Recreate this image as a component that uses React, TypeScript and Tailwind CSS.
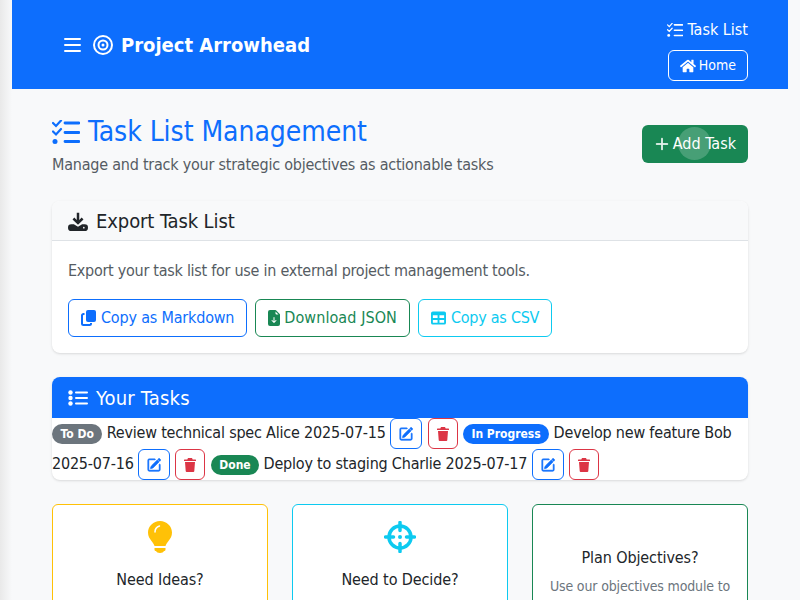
import { BsFileEarmarkArrowDownFill, BsPencilSquare, BsPlusLg } from "react-icons/bs";
import { FaHome } from "react-icons/fa";

const font = "font-['DejaVu_Sans_Condensed','DejaVu_Sans',sans-serif]";

function MenuIcon() {
  return (
    <svg viewBox="0 0 17 16" className="h-[16px] w-[17px]" fill="none" stroke="currentColor" strokeWidth="2" strokeLinecap="round">
      <path d="M1 2h15M1 8h15M1 14h15" />
    </svg>
  );
}

function BullseyeIcon() {
  return (
    <svg viewBox="0 0 20 20" className="ml-[12px] h-[20px] w-[20px]" fill="none" stroke="currentColor" strokeWidth="2">
      <circle cx="10" cy="10" r="9" />
      <circle cx="10" cy="10" r="4.500" />
      <circle cx="10" cy="10" r="1.500" fill="currentColor" stroke="none" />
    </svg>
  );
}

function ListCheckIcon({ className }: { className: string }) {
  return (
    <svg viewBox="0 0 28 24" className={className} fill="none" stroke="currentColor" strokeLinecap="round">
      <path d="M13 3h14M13 12.500h14M13 21.500h14" strokeWidth="2.800" />
      <path d="M1 3l3 3 5-5.500M1 11.500l3 3 5-5.500" strokeWidth="2.200" />
      <circle cx="3" cy="21.500" r="2.500" fill="currentColor" stroke="none" />
    </svg>
  );
}

function TasksIcon() {
  return (
    <svg viewBox="0 0 20 16" className="h-[16px] w-[20px]" fill="currentColor" stroke="currentColor" strokeLinecap="round">
      <circle cx="2.500" cy="2.500" r="2.200" stroke="none" />
      <circle cx="2.500" cy="8" r="2.200" stroke="none" />
      <circle cx="2.500" cy="13.500" r="2.200" stroke="none" />
      <path d="M8 2.500h11M8 8h11M8 13.500h11" strokeWidth="2" />
    </svg>
  );
}

function ExportIcon() {
  return (
    <svg viewBox="0 0 24 24" className="h-[20px] w-[20px]" fill="currentColor">
      <path d="M12 2v12M6.500 9l5.500 5.500L17.500 9" fill="none" stroke="currentColor" strokeWidth="3" />
      <path d="M4 16h3l5 3 5-3h3a4 4 0 0 1 0 8H4a4 4 0 0 1 0-8z" />
      <circle cx="19" cy="20" r="1" fill="#f8f9fa" />
    </svg>
  );
}

function CopyIcon() {
  return (
    <svg viewBox="0 0 16 16" className="h-[16px] w-[16px]" fill="currentColor">
      <rect x="5" y="0" width="10" height="12" rx="2" />
      <path d="M3.500 4H2.500A1.500 1.500 0 0 0 1 5.500v8A1.500 1.500 0 0 0 2.500 15h6a1.500 1.500 0 0 0 1.500-1.500v-.5" fill="none" stroke="currentColor" strokeWidth="2" />
    </svg>
  );
}

function TableIcon() {
  return (
    <svg viewBox="0 0 16 14" className="h-[14px] w-[15px]" fill="currentColor">
      <path fillRule="evenodd" d="M2 0h12a2 2 0 0 1 2 2v10a2 2 0 0 1-2 2H2a2 2 0 0 1-2-2V2a2 2 0 0 1 2-2zM2 4v3h5V4H2zm7 0v3h5V4H9zM2 9v3h5V9H2zm7 0v3h5V9H9z" />
    </svg>
  );
}

function TrashIcon() {
  return (
    <svg viewBox="0 0 12 14" className="h-[14px] w-[12px]" fill="currentColor">
      <path d="M4 0h4l.7 1.500H11.500a.5.5 0 0 1 .5.5v1H0V2a.5.5 0 0 1 .5-.5h2.800z" />
      <path d="M1 4h10l-.7 9a1 1 0 0 1-1 1H2.700a1 1 0 0 1-1-1z" />
    </svg>
  );
}

function BulbIcon() {
  return (
    <svg viewBox="0 0 24 32" className="h-[32px] w-[24px] text-[#ffc107]" fill="currentColor">
      <path d="M12 0C5.400 0 0 5.200 0 11.500c0 3.500 1.500 6 3.500 8.500 1.300 1.600 2.500 3.300 3 5h11c.5-1.700 1.700-3.400 3-5 2-2.500 3.500-5 3.500-8.500C24 5.200 18.600 0 12 0z" />
      <path d="M6.500 27h11v1.500c0 1-.8 1.500-1.500 1.500-.5 1.200-2 2-4 2s-3.500-.8-4-2c-.7 0-1.500-.5-1.500-1.500V27z" />
      <path d="M7 11c0-3 1.800-5.200 4.500-6" fill="none" stroke="#fff" strokeWidth="1.500" strokeLinecap="round" />
    </svg>
  );
}

function CrosshairIcon() {
  return (
    <svg viewBox="0 0 32 32" className="h-[32px] w-[32px] text-[#0dcaf0]" fill="none" stroke="currentColor">
      <circle cx="16" cy="16" r="11" strokeWidth="3.500" />
      <path d="M16 1.500v8M16 22.500v8M1.500 16h8M22.500 16h8" strokeWidth="3.500" strokeLinecap="round" />
      <circle cx="16" cy="16" r="2" fill="currentColor" stroke="none" />
    </svg>
  );
}

function RowActions() {
  return (
    <>
      <button className="inline-flex h-[31px] w-[32px] items-center justify-center rounded-md border border-[#0d6efd] align-middle text-[#0d6efd]">
        <BsPencilSquare className="h-[14px] w-[14px]" stroke="currentColor" strokeWidth={0.9} />
      </button>{" "}
      <button className="mx-[1px] inline-flex h-[31px] w-[30px] items-center justify-center rounded-md border border-[#dc3545] align-middle text-[#dc3545]">
        <TrashIcon />
      </button>{" "}
    </>
  );
}

function Badge({ label, color }: { label: string; color: string }) {
  return (
    <span className={`${color} inline-block rounded-full px-[8.5px] py-[4px] text-[12px] leading-none font-bold tracking-normal text-white`}>
      {label}
    </span>
  );
}

function HelpCard({ border, icon, title }: { border: string; icon: React.ReactNode; title: string }) {
  return (
    <div className={`${border} flex h-[150px] flex-col items-center rounded-md border bg-white px-4 pt-4 text-center`}>
      {icon}
      <h5 className="mt-[15px] text-[16px] leading-[24px] tracking-[-0.1px] text-[#212529]">{title}</h5>
    </div>
  );
}

export default function App() {
  return (
    <div className={`${font} h-[600px] w-[800px] overflow-hidden bg-[#f8f9fa] text-[16px] text-[#212529]`}>
      <div className="flex h-full">
        <div className="w-[12px] shrink-0 bg-gradient-to-r from-[#e9e9e9] to-[#f8f9fa]" />
        <div className="min-w-0 flex-1">
          {/* Navbar */}
          <nav className="flex h-[89px] justify-between bg-[#0d6efd] pr-[40px] pl-[52px] text-white">
            <div className="flex items-center">
              <MenuIcon />
              <BullseyeIcon />
              <span className="ml-[8px] text-[20px] font-bold">Project Arrowhead</span>
            </div>
            <div className="flex flex-col items-end gap-[11px] pt-[20px]">
              <div className="flex h-[19px] items-center gap-[4px]">
                <ListCheckIcon className="h-[14px] w-[16px]" />
                <span>Task List</span>
              </div>
              <button className="flex h-[31px] items-center gap-[3px] rounded-md border border-white px-[11px] text-[14px]">
                <FaHome className="h-[16px] w-[16px]" />
                Home
              </button>
            </div>
          </nav>

          <main className="px-[40px] pt-[26px]">
            {/* Page header */}
            <div className="flex items-center justify-between">
              <div>
                <h1 className="flex items-center gap-[8px] text-[28px] leading-[34px] tracking-[-0.05px] text-[#0d6efd]">
                  <ListCheckIcon className="h-[24px] w-[28px]" />
                  Task List Management
                </h1>
                <p className="mt-[4px] tracking-[-0.23px] text-[#555c63]">Manage and track your strategic objectives as actionable tasks</p>
              </div>
              <button className="relative mb-[4px] flex h-[38px] items-center gap-[3px] overflow-hidden rounded-md bg-[#198754] px-[12px] text-white">
                <BsPlusLg className="h-[16px] w-[16px]" stroke="currentColor" strokeWidth={0.6} />
                Add Task
                <span className="absolute top-[2px] left-[36px] h-[33px] w-[33px] rounded-full bg-white/20" />
              </button>
            </div>

            {/* Export */}
            <section className="mt-[24px] overflow-hidden rounded-lg bg-white shadow-sm">
              <div className="flex h-[40px] items-center gap-[8px] border-b border-[#dee2e6] bg-[#f8f9fa] px-[16px] text-[20px] tracking-[-0.1px]">
                <ExportIcon />
                Export Task List
              </div>
              <div className="p-[16px] pt-[18px]">
                <p className="tracking-[-0.27px] text-[#555c63]">Export your task list for use in external project management tools.</p>
                <div className="mt-[16px] flex gap-[8px]">
                  <button className="flex h-[38px] items-center gap-[4px] rounded-md border border-[#0d6efd] px-[12px] tracking-[-0.19px] text-[#0d6efd]">
                    <CopyIcon />
                    Copy as Markdown
                  </button>
                  <button className="flex h-[38px] items-center gap-[4px] rounded-md border border-[#198754] px-[12px] tracking-[0.08px] text-[#198754]">
                    <BsFileEarmarkArrowDownFill viewBox="2 0 12 16" className="h-[16px] w-[12px]" />
                    Download JSON
                  </button>
                  <button className="flex h-[38px] items-center gap-[5px] rounded-md border border-[#0dcaf0] px-[12px] tracking-[-0.25px] text-[#0dcaf0]">
                    <TableIcon />
                    Copy as CSV
                  </button>
                </div>
              </div>
            </section>

            {/* Tasks */}
            <section className="mt-[24px] overflow-hidden rounded-lg bg-white shadow-sm">
              <div className="flex h-[41px] items-center gap-[8px] bg-[#0d6efd] px-[16px] text-[20px] tracking-[0.2px] text-white">
                <TasksIcon />
                Your Tasks
              </div>
              <div className="leading-[24px] tracking-[-0.2px]">
                <Badge label="To Do" color="bg-[#6c757d]" /> Review technical spec Alice 2025-07-15 <RowActions />
                <Badge label="In Progress" color="bg-[#0d6efd]" /> Develop new feature Bob 2025-07-16 <RowActions />
                <Badge label="Done" color="bg-[#198754]" /> Deploy to staging Charlie 2025-07-17 <RowActions />
              </div>
            </section>

            {/* Help cards */}
            <div className="mt-[24px] grid grid-cols-3 gap-[24px]">
              <HelpCard border="border-[#ffc107]" icon={<BulbIcon />} title="Need Ideas?" />
              <HelpCard border="border-[#0dcaf0]" icon={<CrosshairIcon />} title="Need to Decide?" />
              <div className="flex h-[150px] flex-col items-center rounded-md border border-[#198754] bg-white px-4 pt-[41px] text-center">
                <h5 className="text-[16px] leading-[24px] tracking-[-0.1px]">Plan Objectives?</h5>
                <p className="mt-[6px] text-[14px] leading-[21px] tracking-[-0.15px] text-[#6c757d]">Use our objectives module to</p>
              </div>
            </div>
          </main>
        </div>
        <div className="w-[12px] shrink-0" />
      </div>
    </div>
  );
}
